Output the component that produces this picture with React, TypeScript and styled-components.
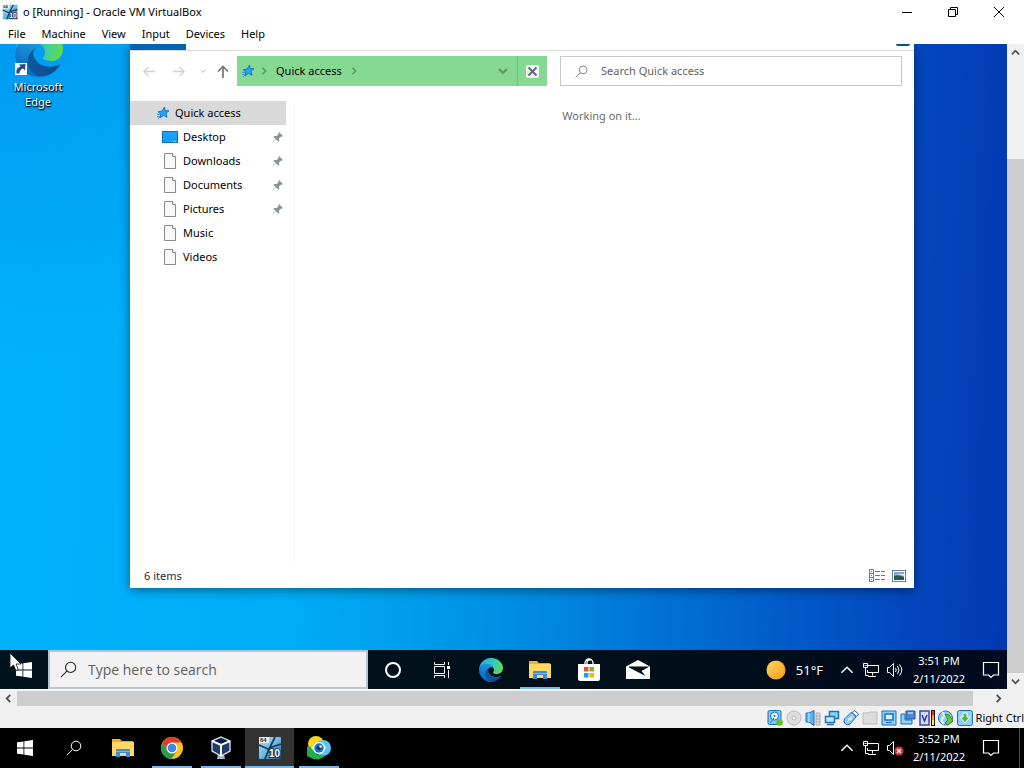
import React from 'react';
import styled, { createGlobalStyle, css } from 'styled-components';

const GlobalStyle = createGlobalStyle`
  *, *::before, *::after { box-sizing: border-box; }
  body {
    margin: 0;
    background: #f0f0f0;
    color: #000;
    font: 11px/16px "Noto Sans", "Open Sans", sans-serif;
  }
  button, input { font: inherit; color: inherit; }
  svg { display: block; flex: none; }
`;

const plainButton = css`
  display: flex;
  align-items: center;
  justify-content: center;
  border: 0;
  padding: 0;
  background: transparent;
`;

const Screen = styled.div`
  display: flex;
  flex-direction: column;
  min-height: 100vh;
`;

/* ---------- VirtualBox frame ---------- */

const TitleBar = styled.header`
  display: flex;
  align-items: center;
  height: 24px;
  padding: 0 2px;
  background: #fff;
`;

const Title = styled.h1`
  flex: 1;
  margin: 0;
  padding-left: 5px;
  font-size: 11px;
  font-weight: 400;
`;

const CaptionButton = styled.button`
  ${plainButton}
  width: 46px;
  height: 20px;
`;

const MenuBar = styled.nav`
  display: flex;
  height: 20px;
  background: #fff;
`;

const MenuButton = styled.button`
  ${plainButton}
  padding: 0 8px;
`;

const Viewport = styled.div`
  flex: 1;
  display: grid;
  grid-template-columns: minmax(0, 1fr) 17px;
  grid-template-rows: 1fr 17px;
`;

const Scrollbar = styled.div<{ $vertical?: boolean }>`
  display: flex;
  flex-direction: ${p => (p.$vertical ? 'column' : 'row')};
  background: #f0f0f0;
`;

const ScrollButton = styled.button`
  ${plainButton}
  flex: none;
  width: 17px;
  height: 17px;
`;

const Track = styled.div<{ $space: string }>`
  flex: 1;
  display: flex;
  padding: ${p => p.$space};
`;

const Thumb = styled.div`
  flex: 1;
  background: #cdcdcd;
`;

const StatusBar = styled.footer`
  display: flex;
  align-items: center;
  justify-content: flex-end;
  gap: 3px;
  height: 21px;
  background: #f0f0f0;
`;

const StatusButton = styled.button`
  ${plainButton}
  width: 16px;
  height: 16px;
`;

const HostKey = styled.span`
  white-space: nowrap;
`;

/* ---------- Guest desktop ---------- */

const Guest = styled.div`
  display: flex;
  flex-direction: column;
  overflow: hidden;
  border-bottom: 1px solid #fff;
`;

const Desktop = styled.main`
  flex: 1;
  display: grid;
  grid-template-columns: 130px minmax(0, 1fr);
  padding: 0 93px 62px 0;
  background:
    radial-gradient(circle at 0 0, rgba(0, 136, 232, 0.55), rgba(0, 136, 232, 0) 320px),
    linear-gradient(92deg, #00b2fd 0%, #00adf5 30%, #00a0ee 40%, #0088e0 55%, #0074d8 65%, #0258c8 80%, #0345bc 91%, #0239b3 100%);
`;

const Shortcut = styled.a`
  justify-self: start;
  align-self: start;
  width: 76px;
  display: flex;
  flex-direction: column;
  align-items: center;
  color: #fff;
  line-height: 15px;
  text-align: center;
  text-decoration: none;
  text-shadow: 0 1px 2px #000, 1px 1px 1px #000;
`;

const Explorer = styled.section`
  display: flex;
  flex-direction: column;
  background: #fff;
  box-shadow: 0 2px 10px rgba(0, 0, 0, 0.45);
`;

const RibbonEdge = styled.div`
  display: flex;
  justify-content: space-between;
  height: 7px;
  padding-right: 4px;
  border-bottom: 1px solid #dadada;
`;

const FileTab = styled.div`
  width: 56px;
  height: 6px;
  background: #0563b1;
`;

const HelpEdge = styled.div`
  width: 14px;
  height: 2px;
  border-radius: 0 0 7px 7px;
  background: #0b4f8c;
`;

const NavRow = styled.div`
  display: grid;
  grid-template-columns: 94px minmax(0, 310fr) minmax(0, 342fr);
  gap: 13px;
  height: 50px;
  padding: 5px 12px 15px 0;
`;

const Arrows = styled.div`
  display: flex;
  align-items: center;
  gap: 8px;
  padding-left: 11px;
`;

const ArrowButton = styled.button<{ $narrow?: boolean }>`
  ${plainButton}
  width: ${p => (p.$narrow ? '8px' : '16px')};
  flex: none;
  height: 22px;
  margin-left: ${p => (p.$narrow ? '4px' : '0')};
  &:first-child { margin: 0 6px 0 0; }
`;

const AddressBar = styled.div`
  display: flex;
  align-items: center;
  background: #86d993;
`;

const Crumbs = styled.div`
  flex: 1;
  display: flex;
  align-items: center;
  gap: 8px;
  padding-left: 3px;
`;

const CrumbRoot = styled.span`
  display: flex;
  align-items: center;
  gap: 4px;
`;

const Crumb = styled.button`
  ${plainButton}
`;

const DropButton = styled.button`
  ${plainButton}
  width: 28px;
  height: 30px;
`;

const StopButton = styled.button`
  ${plainButton}
  width: 30px;
  height: 30px;
  border-left: 1px solid #6fbf7c;
`;

const SearchField = styled.label`
  display: flex;
  align-items: center;
  gap: 13px;
  padding: 0 14px;
  border: 1px solid #c8c8c8;
`;

const SearchInput = styled.input`
  flex: 1;
  min-width: 0;
  border: 0;
  padding: 0;
  outline: 0;
  background: transparent;
  &::placeholder { color: #5f5f5f; opacity: 1; }
`;

const Panes = styled.div`
  flex: 1;
  display: grid;
  grid-template-columns: 165px minmax(0, 1fr);
`;

const Tree = styled.ul`
  margin: 0;
  padding: 0;
  list-style: none;
  border-right: 1px solid #f8f8f8;
`;

const TreeItem = styled.li<{ $root?: boolean }>`
  display: flex;
  align-items: center;
  gap: ${p => (p.$root ? '4px' : '5px')};
  width: 156px;
  height: 24px;
  padding: 0 2px 0 ${p => (p.$root ? '25px' : '32px')};
  background: ${p => (p.$root ? '#d9d9d9' : 'transparent')};
`;

const TreeLabel = styled.span`
  flex: 1;
`;

const Message = styled.p`
  margin: 7px 0 0;
  padding-right: 6px;
  text-align: center;
  color: #6d6d6d;
`;

const ItemBar = styled.div`
  display: flex;
  align-items: center;
  gap: 6px;
  height: 24px;
  padding: 0 8px 0 14px;
`;

const ItemCount = styled.span`
  flex: 1;
  color: #1c2b3d;
`;

const ViewButton = styled.button`
  ${plainButton}
`;

/* ---------- Taskbars ---------- */

const TaskButton = styled.button<{ $running?: boolean; $active?: boolean }>`
  ${plainButton}
  width: 49px;
  flex: none;
  background: ${p => (p.$active ? '#333' : 'transparent')};
  ${p => p.$running && css`
    background-image: linear-gradient(#76b9ed, #76b9ed);
    background-repeat: no-repeat;
    background-position: bottom center;
    background-size: ${p.$active ? '100%' : '40px'} 2px;
  `}
`;

const Taskbar = styled.nav<{ $guest?: boolean }>`
  position: relative;
  display: flex;
  height: ${p => (p.$guest ? '39px' : '40px')};
  color: #fff;
  background: ${p => (p.$guest ? 'linear-gradient(90deg, #00141c, #000e1a 70%, #000a20)' : '#000')};
  ${p => p.$guest && css`
    ${TaskButton}:first-child { width: 48px; }
  `}
`;

const TaskSearch = styled.label`
  display: flex;
  align-items: center;
  gap: 11px;
  width: 320px;
  padding: 0 10px;
  border: 2px solid #b9c4cb;
  background: #f2f2f2;
  color: #333;
  font: 14px/20px "Open Sans", "Noto Sans", sans-serif;
`;

const Spacer = styled.div`
  flex: 1;
`;

const Weather = styled.button`
  ${plainButton}
  gap: 10px;
  margin-right: 12px;
  font-size: 13px;
`;

const TrayButton = styled.button`
  ${plainButton}
  width: 24px;
`;

const Clock = styled.time`
  display: flex;
  flex-direction: column;
  justify-content: center;
  width: 64px;
  text-align: center;
  line-height: 18px;
`;

const NoticeButton = styled.button`
  ${plainButton}
  width: 32px;
  margin-left: 4px;
`;

const DesktopPeek = styled.button`
  ${plainButton}
  width: 5px;
  margin-left: 12px;
  border-left: 1px solid #4a4a4a;
`;

const Cursor = styled.div`
  position: absolute;
  left: 9px;
  top: 2px;
  pointer-events: none;
`;

/* ---------- Icons ---------- */

const Chevron = ({ d, color = '#505050', size = 9, w = 2 }: { d: 'up' | 'down' | 'left' | 'right'; color?: string; size?: number; w?: number }) => {
  const paths = { up: 'M1 7 5 3 9 7', down: 'M1 3 5 7 9 3', left: 'M7 1 3 5 7 9', right: 'M3 1 7 5 3 9' };
  return <svg width={size} height={size} viewBox="0 0 10 10" fill="none" stroke={color} strokeWidth={w}><path d={paths[d]} /></svg>;
};

const EdgeLogo = ({ size = 24 }: { size?: number }) => (
  <svg width={size} height={size} viewBox="0 0 256 256">
    <defs>
      <linearGradient id="edgeDeep" x1="60" y1="180" x2="240" y2="180" gradientUnits="userSpaceOnUse"><stop stopColor="#0c59a4" /><stop offset="1" stopColor="#114a8b" /></linearGradient>
      <linearGradient id="edgeBlue" x1="150" y1="80" x2="45" y2="220" gradientUnits="userSpaceOnUse"><stop stopColor="#1b9de2" /><stop offset=".6" stopColor="#1681cf" /><stop offset="1" stopColor="#0669bc" /></linearGradient>
      <linearGradient id="edgeTop" x1="10" y1="60" x2="245" y2="120" gradientUnits="userSpaceOnUse"><stop stopColor="#2ba9e0" /><stop offset=".5" stopColor="#2fc6c9" /><stop offset="1" stopColor="#5ddb52" /></linearGradient>
    </defs>
    <path fill="url(#edgeDeep)" d="M231 190.500c-3.400 1.800-6.900 3.400-10.400 4.700a101 101 0 0 1-35.500 6.300c-46.700 0-87.400-32.100-87.400-73.400a31 31 0 0 1 16.200-27c-42.200 1.800-53.100 45.900-53.100 71.700 0 73 67.300 80.400 81.800 80.400 7.800 0 19.600-2.300 26.700-4.500l1.300-.4a128.500 128.500 0 0 0 66.600-52.800 4 4 0 0 0-5.400-5.700z" />
    <path fill="url(#edgeBlue)" d="M105.700 241.400a79 79 0 0 1-22.700-21.300 80.700 80.700 0 0 1 29.500-120c3.100-1.500 8.500-4.100 15.500-4a32.400 32.400 0 0 1 25.700 13 31.900 31.900 0 0 1 6.400 18.700c0-.2 24.500-79.600-80-79.600-43.900 0-80 41.600-80 78.200a130 130 0 0 0 12.100 56 128 128 0 0 0 156.400 67.100 75.500 75.500 0 0 1-62.900-8.100z" />
    <path fill="url(#edgeTop)" d="M152.300 148.900c-.8 1-3.300 2.500-3.300 5.600 0 2.600 1.700 5.100 4.700 7.200 14.400 10 41.500 8.700 41.600 8.700a59.600 59.600 0 0 0 30.300-8.300 61.400 61.400 0 0 0 30.400-52.900c.3-22.400-8-37.300-11.300-43.900C223.500 23.800 177.700 0 128 0A128 128 0 0 0 0 126.200c.5-36.500 36.800-66 80-66 3.500 0 23.500.3 42 10 16.300 8.600 24.900 19 30.900 29.200 6.100 10.700 7.200 24.200 7.200 29.500 0 5.400-2.700 13.400-7.800 20z" />
  </svg>
);

const ShortcutEdge = () => (
  <svg width="50" height="35" viewBox="0 0 50 35">
    <svg x="2" y="-15" width="48" height="48" viewBox="0 0 48 48"><EdgeLogo size={48} /></svg>
    <rect x="2" y="19" width="12" height="12" fill="#fff" />
    <path d="M3.500 29.500c-.5-4 1-6 4-7l-1.500-2 6.500-.5-.5 6.500-2-2c-2.500 1-3.500 2.500-3.500 5z" fill="#274a86" />
  </svg>
);

const VmIcon = ({ size }: { size: number }) => (
  <svg width={size} height={size} viewBox="0 0 24 24">
    <defs><linearGradient id="vmPane" x2="1" y2="1"><stop stopColor="#b8e2f5" /><stop offset=".5" stopColor="#6bbbe6" /><stop offset="1" stopColor="#1b5a96" /></linearGradient></defs>
    <rect x="1" y="1" width="22" height="22" rx="1" fill="url(#vmPane)" />
    <path d="M17 1 11 13 7 23M1 9l9 4 13 9M11 12l12-4" stroke="#173a5c" strokeWidth="1.800" fill="none" />
    <rect x="1" y="1" width="10" height="6" fill="#eef3f6" />
    <text x="2" y="6" fontSize="6" fontWeight="700" fontFamily="Liberation Sans, sans-serif" fill="#222">64</text>
    <text x="11" y="21" fontSize="10" fontWeight="700" fontFamily="Liberation Sans, sans-serif" fill="#fff" stroke="#173a5c" strokeWidth="2" paintOrder="stroke">10</text>
  </svg>
);

const Star = () => (
  <svg width="16" height="16" viewBox="0 0 16 16">
    <path d="M9.500 2 10.200 5.600 14 5.800 11 8.200 12 12.300 8.500 10.300 5 13 5.800 9 3 6.700 7 6.200z" fill="#26a4f2" stroke="#1779c4" strokeWidth="1" />
    <path d="M2 9.500h3M2 11.500h3M3 14 5 12" stroke="#4495cf" strokeWidth="1" />
  </svg>
);

const DesktopIcon = () => (
  <svg width="16" height="14" viewBox="0 0 16 14"><rect x=".5" y="1.500" width="15" height="11" fill="#18a0fb" stroke="#0a70bd" /><path d="M11 11.500h1m1 0h1" stroke="#fff" /></svg>
);

const PageIcon = () => (
  <svg width="16" height="16" viewBox="0 0 16 16"><path d="M2.500.5h8l3 3v12h-11z" fill="#f8f8f8" stroke="#8b8b8b" /><path d="M10.500.5v3h3" fill="#fff" stroke="#8b8b8b" /></svg>
);

const Pin = () => (
  <svg width="12" height="12" viewBox="0 0 12 12"><path d="M7 1l4 4-1 .7-1-.3-2 2 .2 2.300-1 .9-2.400-2.400L1 11.300l-.4-.4L3.500 8 1.300 5.800l1-.9 2.300.2 2-2L6.300 2z" fill="#8d939b" /></svg>
);

const Magnifier = ({ size, color, w = 1 }: { size: number; color: string; w?: number }) => (
  <svg width={size} height={size} viewBox="0 0 16 16" fill="none" stroke={color} strokeWidth={w}><circle cx="10" cy="6" r="4.800" /><path d="M6.500 9.500.8 15.200" /></svg>
);

const Windows = () => (
  <svg width="16" height="16" viewBox="0 0 16 16" fill="#fff"><path d="M0 2.300 6.500 1.400v6.200H0zM7.300 1.300 16 0v7.600H7.300zM0 8.400h6.500v6.200L0 13.700zM7.300 8.400H16V16l-8.700-1.300z" /></svg>
);

const Folder = () => (
  <svg width="22" height="20" viewBox="0 0 22 20">
    <path d="M0 1h8l2 2h11v15H0z" fill="#e5a321" /><path d="M0 4h22v14H0z" fill="#ffd767" /><path d="M0 1h8v3H0z" fill="#f1b12e" />
    <path d="M4 19v-7q0-1 1-1h12q1 0 1 1v7h-4v-4H8v4z" fill="#3f8dd0" /><path d="M4 13.500h14" stroke="#79b7e6" />
  </svg>
);

const TaskView = () => (
  <svg width="18" height="16" viewBox="0 0 18 16" fill="none" stroke="#fff"><path d="M1.500 0v2.500h10V0M1.500 16v-2.500h10V16M1.500 4.500h10v7h-10zM15.500 0v3M15.500 8v8" /><path d="M14 4h3v3h-3z" fill="#fff" stroke="none" /></svg>
);

const Store = () => (
  <svg width="24" height="24" viewBox="0 0 24 24"><path d="M8 7V5a4 4 0 0 1 8 0v2M10 7V4a3 3 0 0 1 4-2" fill="none" stroke="#fff" strokeWidth="1.300" /><path d="M1 6h22v15q0 2-2 2H3q-2 0-2-2z" fill="#fff" /><path d="M7 9h4.500v4.500H7z" fill="#e8502b" /><path d="M12.500 9H17v4.500h-4.500z" fill="#7cb518" /><path d="M7 15h4.500v4.500H7z" fill="#1da0e5" /><path d="M12.500 15H17v4.500h-4.500z" fill="#f7b50c" /></svg>
);

const Mail = () => (
  <svg width="24" height="20" viewBox="0 0 24 20"><path d="M0 6.500 12 0l12 6.500V19H0z" fill="#fff" /><path d="M3 6.500h20.500L15.500 11l4 5L3 7.500z" fill="#000f18" /></svg>
);

const Network = () => (
  <svg width="18" height="16" viewBox="0 0 18 16" fill="none" stroke="#fff"><path d="M6 3.500h10.500v7H5.500V8M10.500 10.500v3M6 14.500h8M1.500 1.500h4v4h-4zM3.500 5.500v8h3M2.500 3.500h2" /></svg>
);

const Speaker = ({ muted }: { muted?: boolean }) => (
  <svg width="18" height="16" viewBox="0 0 18 16" fill="none" stroke="#fff">
    <path d="M1.500 5.500h2l4-4v13l-4-4h-2z" />
    {muted
      ? <><circle cx="13" cy="11" r="4.500" fill="#d9312f" stroke="none" /><path d="m11 9 4 4m0-4-4 4" strokeWidth="1.300" /></>
      : <path d="M9.500 6q1.500 2 0 4M11.500 4q3 4 0 8M13.500 2.500q4.500 5.500 0 11" />}
  </svg>
);

const Notice = () => (
  <svg width="18" height="18" viewBox="0 0 18 18" fill="none" stroke="#fff" strokeWidth="1.200"><path d="M1.500 1.500h15v12.500h-5L9 16.500 6.500 14h-5z" /></svg>
);

const Chrome = () => (
  <svg width="22" height="22" viewBox="0 0 22 22"><circle cx="11" cy="11" r="11" fill="#fbc116" /><path d="M1.500 5.500A11 11 0 0 1 20.500 5.500H11l-4.800 8.200z" fill="#e33b2e" /><path d="M1.500 5.500A11 11 0 0 0 10.400 22l5.400-8.300-9.600 0z" fill="#269f4b" /><circle cx="11" cy="11" r="5.500" fill="#fff" /><circle cx="11" cy="11" r="4.300" fill="#3f83ee" /></svg>
);

const VBox = () => (
  <svg width="20" height="24" viewBox="0 0 20 24"><path d="M7 18h6l1 5H6z" fill="#aab5bf" /><path d="M10 1 19 5v10l-9 5-9-5V5z" fill="#203a6d" stroke="#dce7f1" strokeWidth="1.300" /><path d="M1 5l9 4 9-4M10 9v11" stroke="#fff" strokeWidth="2" fill="none" /><path d="m4 5 6-2.500L16 5l-6 2.500z" fill="#0b1c48" /></svg>
);

const EyeApp = () => (
  <svg width="24" height="24" viewBox="0 0 24 24"><circle cx="9" cy="8" r="8" fill="#f6d51a" /><circle cx="16" cy="12" r="8" fill="#5bc3f2" /><path d="M1 10a8 7 0 0 0 3 12q8 4 15-3-10 2-13-7z" fill="#22ae47" /><path d="M4 12q8-9 15 0-7 9-15 0z" fill="#fff" /><circle cx="12" cy="12" r="6" fill="#fff" /><circle cx="12" cy="12" r="4.700" fill="#1473c4" /><circle cx="12" cy="12" r="2" fill="#072c60" /><circle cx="13.500" cy="10.500" r="1.200" fill="#fff" /></svg>
);

const Bars = () => (
  <svg width="17" height="14" viewBox="0 0 17 14" fill="none" stroke="#777"><path d="M.5.500h4v12h-4zM.5 4.500h4M.5 8.500h4M6 2.500h5M12 2.500h4M6 6.500h5M12 6.500h4M6 10.500h5M12 10.500h4M2 2.500h1M2 6.500h1M2 10.500h1" /></svg>
);

const LargeView = () => (
  <svg width="14" height="12" viewBox="0 0 14 12"><rect x=".5" y=".5" width="13" height="11" fill="#fff" stroke="#6f7f90" /><path d="M2 2h10v8H2z" fill="#7fa5d8" /><path d="M2 6q4-2 10 1v3H2z" fill="#28594e" /><path d="M2 4q4 0 10 2V4z" fill="#dceaf7" /></svg>
);

const s = '#1f6fb5';
const deviceIcons: [string, React.ReactNode][] = [
  ['Hard disks', <><rect x="1" y=".5" width="13" height="14" rx="1.500" fill="#7cc6fa" stroke={s} /><circle cx="7.500" cy="6" r="4" fill="#e9f8ff" stroke={s} /><circle cx="7.500" cy="6" r="1" fill={s} /><path d="M3 13 7 8" stroke={s} /><circle cx="12.500" cy="12.500" r="3.300" fill="#5dc32b" /></>],
  ['Optical drives', <><circle cx="8" cy="8" r="7" fill="#dedede" stroke="#b9b9b9" /><circle cx="8" cy="8" r="2" fill="#f5f5f5" stroke="#b5b5b5" /></>],
  ['Audio', <><path d="M1 3h3l5-2.500v15L4 12H1z" fill="#58b5ef" stroke={s} /><path d="M4 3v9" stroke="#d8f1ff" /><path d="M11 3h4v12h-4zM11 6h4M11 9h4M11 12h4" fill="#ddd" stroke="#aaa" /></>],
  ['Network', <><path d="M5.500 1.500h9v7h-9z" fill="#8fd0fa" stroke={s} strokeWidth="1.500" /><path d="M1.500 6.500h9v6h-9z" fill="#c4e8fc" stroke={s} strokeWidth="1.500" /><path d="M3 14.500h7" stroke={s} strokeWidth="1.500" /></>],
  ['USB', <><path d="M1.500 9 8 2.500q3 0 5 4.500l-6 7q-3 2-5-.5t-.5-4.500z" fill="#8bcbf9" stroke={s} /><path d="m9 2.500 2.500-2L15.500 4l-2 2.500z" fill="#fff" stroke={s} /><path d="m4 12 6-6M6 10V8M7 9h2" stroke="#fff" /></>],
  ['Shared folders', <path d="M1 3h5l1-1h8v12H1z" fill="#dcdcdc" stroke="#bcbcbc" />],
  ['Display', <><path d="M1 1h14v14H1z" fill="#8fd0fa" stroke={s} /><path d="M4 4h8v6H4z" fill="#d8f1ff" stroke={s} strokeWidth="1.500" /><path d="M5 12.500h6" stroke={s} /></>],
  ['Recording', <><path d="M1 4h4v6h7v4H1z" fill="#8fd0fa" stroke={s} /><path d="M6 1h9v8H6z" fill="#4b86de" stroke="#264f9a" /><path d="M8 3h5" stroke="#fff" /></>],
  ['Processor', <><path d="M1 1h9v14H1z" fill="#d7dcff" stroke="#3946a0" strokeWidth="1.500" /><path d="M3 5l2.500 6L8 5" fill="none" stroke="#2c3a9c" strokeWidth="1.500" /><path d="M12 0h4v16h-4z" fill="#111" /><path d="M13 1h2v4h-2z" fill="#e82e1c" /><path d="M13 5h2v5h-2z" fill="#ffae00" /><path d="M13 10h2v5h-2z" fill="#fff04a" /></>],
  ['Mouse integration', <><circle cx="7.500" cy="8" r="7" fill="#8fd0fa" stroke={s} /><path d="M4 2q4 3 1 6t1 6" fill="none" stroke="#e5f7ff" strokeWidth="2" /><path d="m7 4 4 1 4 6-5 4-3-2 3-3z" fill="#6bcb3a" stroke="#2f8a25" /></>],
  ['Keyboard', <><rect x=".5" y=".5" width="15" height="15" rx="2" fill="#8fd0fa" stroke={s} /><path d="M6 3h4v4h3l-5 6-5-6h3z" fill="#49bd38" stroke="#fff" /></>],
];

const folders = [
  { name: 'Desktop', pinned: true, desktop: true },
  { name: 'Downloads', pinned: true },
  { name: 'Documents', pinned: true },
  { name: 'Pictures', pinned: true },
  { name: 'Music' },
  { name: 'Videos' },
];

const hostApps: [string, React.ReactNode, boolean, boolean][] = [
  ['File Explorer', <Folder />, false, false],
  ['Google Chrome', <Chrome />, true, false],
  ['Oracle VM VirtualBox', <VBox />, true, false],
  ['Virtual machine', <VmIcon size={24} />, true, true],
  ['Viewer', <EyeApp />, true, false],
];

const guestApps: [string, React.ReactNode, boolean][] = [
  ['Cortana', <svg width="18" height="18" viewBox="0 0 18 18"><circle cx="9" cy="9" r="7" fill="none" stroke="#fff" strokeWidth="2" /></svg>, false],
  ['Task View', <TaskView />, false],
  ['Microsoft Edge', <EdgeLogo />, false],
  ['File Explorer', <Folder />, true],
  ['Microsoft Store', <Store />, false],
  ['Mail', <Mail />, false],
];

const Tray = ({ time, muted }: { time: string; muted?: boolean }) => (
  <>
    <TrayButton aria-label="Hidden icons"><Chevron d="up" color="#fff" size={14} w={1} /></TrayButton>
    <TrayButton aria-label="Network"><Network /></TrayButton>
    <TrayButton aria-label="Volume"><Speaker muted={muted} /></TrayButton>
    <Clock><span>{time}</span><span>2/11/2022</span></Clock>
    <NoticeButton aria-label="Notifications"><Notice /></NoticeButton>
  </>
);

export default function App() {
  return (
    <Screen>
      <GlobalStyle />
      <TitleBar>
        <VmIcon size={16} />
        <Title>o [Running] - Oracle VM VirtualBox</Title>
        <CaptionButton aria-label="Minimize"><svg width="10" height="10" stroke="#000"><path d="M0 5.500h10" /></svg></CaptionButton>
        <CaptionButton aria-label="Restore"><svg width="10" height="10" stroke="#000" fill="none"><path d="M.5 2.500h7v7h-7zM2.500 2.500v-2h7v7h-2" /></svg></CaptionButton>
        <CaptionButton aria-label="Close"><svg width="10" height="10" stroke="#000"><path d="m0 0 10 10M10 0 0 10" /></svg></CaptionButton>
      </TitleBar>
      <MenuBar>
        {['File', 'Machine', 'View', 'Input', 'Devices', 'Help'].map(m => <MenuButton key={m}>{m}</MenuButton>)}
      </MenuBar>

      <Viewport>
        <Guest>
          <Desktop>
            <Shortcut href="#edge"><ShortcutEdge /><span>Microsoft<br />Edge</span></Shortcut>
            <Explorer>
              <RibbonEdge><FileTab /><HelpEdge /></RibbonEdge>
              <NavRow>
                <Arrows>
                  <ArrowButton aria-label="Back"><svg width="12" height="11" fill="none" stroke="#d3d3d3" strokeWidth="1.500"><path d="M12 5.500H1M5.500 1 1 5.500 5.500 10" /></svg></ArrowButton>
                  <ArrowButton aria-label="Forward"><svg width="12" height="11" fill="none" stroke="#d3d3d3" strokeWidth="1.500"><path d="M0 5.500h11M6.500 1 11 5.500 6.500 10" /></svg></ArrowButton>
                  <ArrowButton $narrow aria-label="Recent"><Chevron d="down" color="#d3d3d3" size={6} /></ArrowButton>
                  <ArrowButton aria-label="Up"><svg width="12" height="13" fill="none" stroke="#777" strokeWidth="1.700"><path d="M6 13V1.500M1 6.500l5-5 5 5" /></svg></ArrowButton>
                </Arrows>
                <AddressBar>
                  <Crumbs>
                    <CrumbRoot>
                      <Star />
                      <Chevron d="right" color="#5a9765" size={8} />
                    </CrumbRoot>
                    <Crumb>Quick access</Crumb>
                    <Chevron d="right" color="#5a9765" size={8} />
                  </Crumbs>
                  <DropButton aria-label="Previous locations"><Chevron d="down" color="#5a9765" size={10} /></DropButton>
                  <StopButton aria-label="Stop loading"><svg width="13" height="13"><rect width="13" height="13" rx="2" fill="#f4f4f4" /><path d="m2.500 2.500 8 8m0-8-8 8" stroke="#666b76" strokeWidth="2" /></svg></StopButton>
                </AddressBar>
                <SearchField>
                  <Magnifier size={13} color="#6d6d6d" />
                  <SearchInput placeholder="Search Quick access" aria-label="Search Quick access" />
                </SearchField>
              </NavRow>
              <Panes>
                <Tree>
                  <TreeItem $root><Star /><TreeLabel>Quick access</TreeLabel></TreeItem>
                  {folders.map(f => (
                    <TreeItem key={f.name}>
                      {f.desktop ? <DesktopIcon /> : <PageIcon />}
                      <TreeLabel>{f.name}</TreeLabel>
                      {f.pinned && <Pin />}
                    </TreeItem>
                  ))}
                </Tree>
                <Message>Working on it...</Message>
              </Panes>
              <ItemBar>
                <ItemCount>6 items</ItemCount>
                <ViewButton aria-label="Details view"><Bars /></ViewButton>
                <ViewButton aria-label="Large icons view"><LargeView /></ViewButton>
              </ItemBar>
            </Explorer>
          </Desktop>
          <Taskbar $guest>
            <TaskButton aria-label="Start"><Windows /></TaskButton>
            <TaskSearch>
              <Magnifier size={17} color="#222" w={1} />
              <SearchInput placeholder="Type here to search" aria-label="Type here to search" />
            </TaskSearch>
            {guestApps.map(([name, icon, running]) => (
              <TaskButton key={name} aria-label={name} $running={running}>{icon}</TaskButton>
            ))}
            <Spacer />
            <Weather>
              <svg width="20" height="20"><defs><linearGradient id="sun" x2="1" y2="1"><stop stopColor="#ffd75e" /><stop offset="1" stopColor="#f79a1c" /></linearGradient></defs><circle cx="10" cy="10" r="9.500" fill="url(#sun)" /></svg>
              51°F
            </Weather>
            <Tray time="3:51 PM" />
            <Cursor><svg width="14" height="20"><path d="M1 1v15l3.500-3 2.300 5.500 2.500-1L7 12h5z" fill="#fff" stroke="#111" strokeWidth=".8" /></svg></Cursor>
          </Taskbar>
        </Guest>
        <Scrollbar $vertical>
          <ScrollButton aria-label="Scroll up"><Chevron d="up" /></ScrollButton>
          <Track $space="98px 0 0 0"><Thumb /></Track>
          <ScrollButton aria-label="Scroll down"><Chevron d="down" /></ScrollButton>
        </Scrollbar>
        <Scrollbar>
          <ScrollButton aria-label="Scroll left"><Chevron d="left" /></ScrollButton>
          <Track $space="1px 17px 1px 0"><Thumb /></Track>
          <ScrollButton aria-label="Scroll right"><Chevron d="right" /></ScrollButton>
        </Scrollbar>
      </Viewport>

      <StatusBar>
        {deviceIcons.map(([name, art]) => (
          <StatusButton key={name} aria-label={name}><svg width="16" height="16" viewBox="0 0 16 16">{art}</svg></StatusButton>
        ))}
        <HostKey>Right Ctrl</HostKey>
      </StatusBar>

      <Taskbar>
        <TaskButton aria-label="Start"><Windows /></TaskButton>
        <TaskButton aria-label="Search"><Magnifier size={16} color="#fff" /></TaskButton>
        {hostApps.map(([name, icon, running, active]) => (
          <TaskButton key={name} aria-label={name} $running={running} $active={active}>{icon}</TaskButton>
        ))}
        <Spacer />
        <Tray time="3:52 PM" muted />
        <DesktopPeek aria-label="Show desktop" />
      </Taskbar>
    </Screen>
  );
}
